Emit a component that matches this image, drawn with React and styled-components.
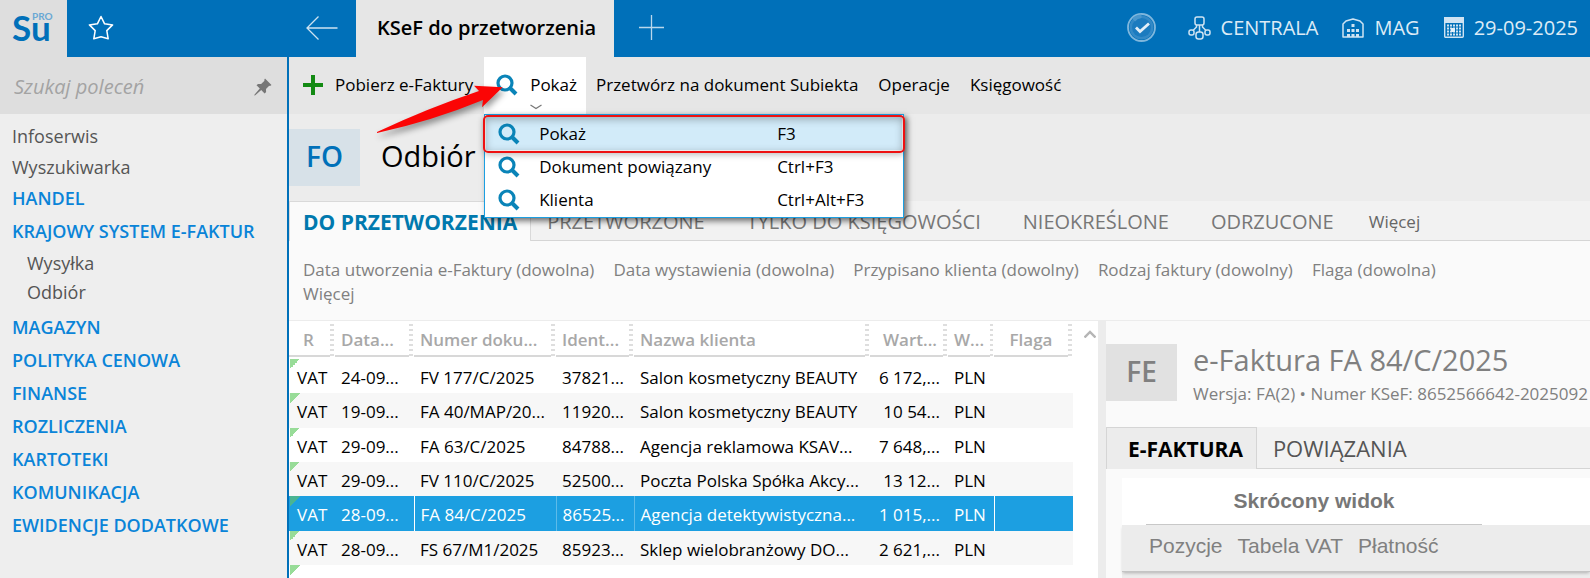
import React from "react";
import styled, { createGlobalStyle } from "styled-components";

const BLUE = "#0070b9";
const SANS = '"Open Sans", "Noto Sans", sans-serif';

const GlobalStyle = createGlobalStyle`
  * {
    box-sizing: border-box;
  }
  body {
    margin: 0;
    font: 17px/24px ${SANS};
    color: #000;
    overflow: hidden;
  }
  button {
    border: 0;
    padding: 0;
    background: none;
    font: inherit;
    color: inherit;
    white-space: nowrap;
    cursor: pointer;
  }
  a {
    color: inherit;
    text-decoration: none;
  }
  svg {
    display: block;
    flex: none;
  }
`;

const Page = styled.div`
  display: flex;
  flex-direction: column;
  height: 100vh;
  overflow: hidden;
`;

/* top bar */

const TopBar = styled.header`
  display: flex;
  flex: none;
  height: 57px;
  background: ${BLUE};
  color: #dcebf6;
  font-size: 20px;
`;

const LogoBox = styled.div`
  width: 67px;
  background: #dedede;
`;

const NavButtons = styled.div`
  display: flex;
  align-items: center;
  justify-content: space-between;
  width: 289px;
  padding: 0 18px 2px 21px;
`;

const ActiveTab = styled.div`
  display: flex;
  align-items: center;
  padding: 0 18px 2px 21px;
  background: #e6e6e6;
  color: #000;
  font-weight: 600;
  white-space: nowrap;
`;

const NewTab = styled.button`
  display: flex;
  align-items: center;
  padding: 0 25px 2px;
`;

const StatusBar = styled.div`
  display: flex;
  align-items: center;
  gap: 24px;
  margin-left: auto;
  padding: 0 12px 2px 0;
`;

const StatusItem = styled.button`
  display: flex;
  align-items: center;
  gap: 10px;
`;

const SyncState = styled(StatusItem)`
  margin-right: 8px;
`;

/* sidebar */

const Body = styled.div`
  display: flex;
  flex: 1;
  min-height: 0;
`;

const Sidebar = styled.aside`
  flex: none;
  width: 289px;
  border-right: 2px solid ${BLUE};
  background: #eee;
`;

const SearchRow = styled.div`
  display: flex;
  align-items: center;
  height: 57px;
  padding: 2px 15px 0 14px;
  background: #dedede;
`;

const SearchInput = styled.input`
  flex: 1;
  min-width: 0;
  padding: 0;
  border: 0;
  outline: 0;
  background: none;
  font: italic 20px/28px ${SANS};
  color: #555;
  &::placeholder {
    color: #a3a3a3;
    opacity: 1;
  }
`;

const Menu = styled.nav`
  display: flex;
  flex-direction: column;
  padding: 7px 12px;
  font-size: 18px;
  line-height: 31px;
  color: #555;
`;

const Category = styled.a`
  margin-bottom: 2px;
  color: #0a84d8;
  font-weight: 600;
`;

const SubMenu = styled.div`
  display: flex;
  flex-direction: column;
  margin-bottom: 5px;
  padding-left: 15px;
  line-height: 29px;
`;

/* toolbar with the open menu */

const Main = styled.main`
  display: flex;
  flex: 1;
  flex-direction: column;
  min-width: 0;
  background: #fafafa;
`;

const Toolbar = styled.div`
  display: flex;
  flex: none;
  height: 57px;
  background: #e6e6e6;
`;

const ToolButton = styled.button`
  position: relative;
  display: flex;
  align-items: center;
  gap: 12px;
  height: 57px;
  padding: 0 10px 2px;
  background: ${props => (props.$open ? "#fff" : "none")};
`;

const IconButton = styled(ToolButton)`
  padding-left: ${props => (props.$open ? "12px" : "14px")};
  padding-right: ${props => (props.$open ? "9px" : "11px")};
`;

const OpenMark = styled.svg`
  position: absolute;
  left: 46px;
  bottom: 4px;
`;

const MenuAnchor = styled.div`
  position: relative;
  z-index: 2;
`;

const Dropdown = styled.div`
  position: absolute;
  top: 57px;
  left: 0;
  width: 420px;
  padding: 2px 1px 1px;
  border: 1px solid #1c9fe1;
  background: #fff;
  box-shadow: 3px 3px 6px rgba(0, 0, 0, 0.55);
`;

const DropdownItem = styled.button`
  display: grid;
  grid-template-columns: 41px 238px 1fr;
  align-items: center;
  width: 100%;
  height: 33px;
  padding-left: 12px;
  text-align: left;
  background: ${props => (props.$active ? "#d2ebf9" : "none")};
`;

const Highlight = styled.div`
  position: absolute;
  top: 0;
  left: -2px;
  right: -2px;
  height: 38px;
  border: 2px solid #ee1111;
  border-radius: 5px;
  box-shadow: inset 0 2px 8px rgba(0, 0, 0, 0.3), 0 2px 6px rgba(0, 0, 0, 0.25);
  pointer-events: none;
`;

const Pointer = styled.svg`
  position: absolute;
  top: 23px;
  left: -114px;
  filter: drop-shadow(2px 4px 3px rgba(0, 0, 0, 0.4));
  pointer-events: none;
`;

/* page heading and tabs */

const Heading = styled.div`
  display: flex;
  flex: none;
  align-items: center;
  gap: 21px;
  height: 87px;
  background: #ececec;
`;

const Badge = styled.div`
  display: flex;
  flex: none;
  align-items: center;
  justify-content: center;
  width: 71px;
  height: 57px;
  padding-bottom: 3px;
  background: ${props => (props.$muted ? "#e1e1e1" : "#d7e1e8")};
  color: ${props => (props.$muted ? "#808080" : BLUE)};
  font-size: 28px;
  font-weight: 600;
`;

const Title = styled.h1`
  margin: 0;
  padding-bottom: 4px;
  font-size: 29px;
  line-height: 34px;
  font-weight: 400;
`;

const TabBar = styled.div`
  display: flex;
  flex: none;
  height: ${props => (props.$tall ? "42px" : "40px")};
  background: #f2f2f2;
`;

const Tab = styled.button`
  padding: 2px 26px 0 16px;
  border-bottom: 1px solid #d5d5d5;
  color: #777;
  font-size: 20px;
`;

const CurrentTab = styled(Tab)`
  padding: 1px 13px 0 13px;
  border: 1px solid #d9d9d9;
  border-bottom: 0;
  background: #fafafa;
  color: #0079ae;
  font-size: 21px;
  font-weight: 700;
`;

const MoreTab = styled(Tab)`
  flex: 1;
  padding: 2px 9px 0;
  color: #666;
  font-size: 17px;
  text-align: left;
`;

const Filters = styled.div`
  flex: none;
  padding: 17px 14px 14px;
  border-bottom: 1px solid #ececec;
  color: #808080;
`;

const FilterRow = styled.div`
  display: flex;
  gap: 19px;
`;

/* documents grid */

const Split = styled.div`
  display: grid;
  flex: 1;
  grid-template-columns: minmax(0, 809fr) 8px minmax(0, 484fr);
  min-height: 0;
`;

const GridPane = styled.section`
  display: flex;
  background: #fff;
  overflow: hidden;
`;

const ScrollColumn = styled.div`
  flex: none;
  width: 25px;
  padding: 9px 0 0 11px;
`;

const Splitter = styled.div`
  background: #ececec;
`;

const Table = styled.table`
  flex: 1;
  align-self: flex-start;
  min-width: 0;
  width: 100%;
  table-layout: fixed;
  border-collapse: collapse;
`;

const Th = styled.th`
  height: 38px;
  padding: 0;
  vertical-align: top;
  color: #a8a8a8;
  font-weight: 600;
  text-align: ${props => props.$align || "left"};
`;

const HeadCell = styled.div`
  display: flex;
  height: 36px;
`;

const HeadLabel = styled.div`
  flex: 1;
  padding: 7px 6px 0 ${props => (props.$first ? "14px" : "6px")};
  border-bottom: 2px solid #d8d8d8;
  white-space: nowrap;
`;

const Grip = styled.div`
  width: 5px;
  margin-top: 3px;
  border-right: 1px solid #fff;
  background: repeating-linear-gradient(#dedede 0 2px, #fff 2px 5px);
`;

const Row = styled.tr`
  height: 34px;
  background: ${props => (props.$selected ? "#1c9fe1" : "#fff")};
  color: ${props => (props.$selected ? "#fff" : "#000")};
  &:nth-child(even) {
    background: #f7f7f7;
  }
  &:nth-child(3n + 2) {
    height: 35px;
  }
`;

const Td = styled.td`
  padding: 3px 8px 0 6px;
  border-right: ${props => (props.$edge ? `1px solid ${props.$edge}` : "0")};
  text-align: ${props => props.$align || "left"};
  white-space: nowrap;
`;

const TypeTd = styled(Td)`
  padding-left: 8px;
  padding-right: 0;
  background: linear-gradient(135deg, ${props => (props.$selected ? "#4ab493" : "#98dc98")} 50%, transparent 50%) 1px 0 / 10px 10px no-repeat;
`;

/* invoice preview */

const Preview = styled.section`
  display: flex;
  flex-direction: column;
  overflow: hidden;
`;

const PreviewHead = styled.div`
  display: flex;
  flex: none;
  gap: 16px;
  height: 106px;
  padding-top: 23px;
  color: #808080;
`;

const PreviewTitle = styled.h2`
  margin: 0 0 6px;
  font-size: 29px;
  line-height: 32px;
  font-weight: 400;
`;

const PreviewText = styled.div`
  min-width: 0;
  white-space: nowrap;
`;

const PreviewCurrent = styled(Tab)`
  padding: 0 13px 0 21px;
  border: 1px solid #d5d5d5;
  border-bottom: 0;
  background: #ececec;
  color: #000;
  font-size: 21px;
  font-weight: 700;
`;

const PreviewTab = styled(Tab)`
  flex: 1;
  padding: 1px 16px 0;
  color: #555;
  font-size: 22px;
  text-align: left;
`;

const Sheet = styled.div`
  flex: 1;
  margin: 9px 0 0 16px;
  background: #ececec;
  color: #777;
  font: 21px/24px "Liberation Sans", Arial, sans-serif;
`;

const SheetTop = styled.div`
  height: 47px;
  padding-left: 24px;
  background: #fff;
`;

const SheetTitle = styled.h3`
  width: 336px;
  height: 47px;
  margin: 0;
  padding-top: 11px;
  border-bottom: 1px solid #c8c8c8;
  font-size: 21px;
  text-align: center;
`;

const SheetNav = styled.nav`
  display: flex;
  align-items: center;
  gap: 15px;
  height: 47px;
  padding: 0 27px 4px;
  border-bottom: 1px solid #c4c4c4;
  box-shadow: 0 2px 3px -1px rgba(0, 0, 0, 0.25);
  color: #808080;
`;

const Logo = () => (
  <svg width="67" height="57" viewBox="0 0 67 57" role="img" aria-label="Su PRO">
    <text x="12" y="41" fontFamily="Lato, sans-serif" fontSize="35" fontWeight="700" fill="#0070b9">Su</text>
    <text x="32" y="20" fontFamily="Lato, sans-serif" fontSize="10" fontWeight="700" fill="#6aa8d4">PRO</text>
  </svg>
);

const Magnifier = () => (
  <svg width="22" height="22" viewBox="0 0 22 22" fill="none" stroke="#0a84b8">
    <circle cx="9" cy="9" r="7" strokeWidth="3.200" />
    <path d="M14 14l6 6" strokeWidth="4" />
  </svg>
);

const PlusIcon = () => (
  <svg width="20" height="20" viewBox="0 0 20 20" fill="#138a13">
    <path d="M8 0h4v8h8v4h-8v8H8v-8H0V8h8z" />
  </svg>
);

const Star = () => (
  <svg width="26" height="26" viewBox="0 0 26 26" fill="none" stroke="#fff" strokeWidth="1.5" strokeLinejoin="round">
    <path d="M13 1.500l3.600 7.300 8 1.100-5.800 5.700 1.400 8.200-7.200-2-7.200 2 1.400-8.200L1.400 9.900l8-1.100z" />
  </svg>
);

const BackArrow = () => (
  <svg width="32" height="24" viewBox="0 0 32 24" fill="none" stroke="#cde2f1" strokeWidth="1.3">
    <path d="M12.500.500L1 12l11.500 11.500M1 12h30.500" />
  </svg>
);

const ThinPlus = () => (
  <svg width="25" height="25" viewBox="0 0 25 25" fill="none" stroke="#b9d7ec" strokeWidth="1.300">
    <path d="M12.500 0v25M0 12.500h25" />
  </svg>
);

const Pin = () => (
  <svg width="18" height="18" viewBox="0 0 18 18" fill="#777">
    <path d="M11 .5l6.500 6.500-1.500 1-.8-.3-3.200 3.400.1 3-1.500 1.400-3.400-3.400L1 17.500H.4v-.8l5.400-6.100L2.500 7.300 4 6l3.100.100 3.400-3.300L10.200 2z" />
  </svg>
);

const CheckCircle = () => (
  <svg width="29" height="29" viewBox="0 0 29 29" fill="none">
    <circle cx="14.500" cy="14.500" r="12" fill="#3389c6" />
    <circle cx="14.500" cy="14.500" r="13.500" stroke="#7fb7dd" strokeWidth="1.800" />
    <circle cx="14.500" cy="14.500" r="9.500" fill="#1b7bbf" />
    <path d="M14.500 1.500A13 13 0 0 0 5 5.500l3 3a9.500 9.500 0 0 1 6.500-3.500z" fill="#4a97cd" />
    <path d="M9 14.500l4 4 9-8" stroke="#e3eff8" strokeWidth="2.800" />
  </svg>
);

const Network = () => (
  <svg width="23" height="24" viewBox="0 0 23 24" fill="none" stroke="#cfe3f2" strokeWidth="1.500">
    <rect x="7" y="1" width="9" height="8" rx="2" />
    <rect x="8" y="16" width="7" height="7" rx="2.500" />
    <rect x="1" y="14" width="5" height="5" rx="2" />
    <rect x="17" y="14" width="5" height="5" rx="2" />
    <path d="M11.500 9v7M8.500 9v2L5 14.500M14.500 9v2l3.500 3.500" />
  </svg>
);

const Warehouse = () => (
  <svg width="22" height="20" viewBox="0 0 22 20" fill="none" stroke="#cfe3f2" strokeWidth="1.500">
    <path d="M1 19V6l3-3 7-2 7 2 3 3v13z" strokeLinejoin="round" />
    <g fill="#cfe3f2" stroke="none">
      <path d="M9.500 6h3v3h-3zM5 11h3v3H5zM9.500 11h3v3h-3zM14 11h3v3h-3zM5 16h3v3H5zM9.500 16h3v3h-3zM14 16h3v3h-3z" />
    </g>
  </svg>
);

const Calendar = () => (
  <svg width="20" height="21" viewBox="0 0 20 21" fill="none">
    <rect x=".7" y=".7" width="18.600" height="19.600" rx="1" stroke="#cfe3f2" strokeWidth="1.400" />
    <path d="M0 0h20v6H0z" fill="#cfe3f2" />
    <path d="M3 8.500h14M3 11.500h14M3 14.500h14M3 17.500h14" stroke="#cfe3f2" strokeWidth="2" strokeDasharray="2 1" />
    <path d="M7 11h4v4H7z" fill="#e3eff8" />
  </svg>
);

const RedArrow = () => (
  <Pointer width="136" height="62" viewBox="0 0 136 62" fill="#fb0505">
    <path d="M7 52Q58 28 109 11l-5-5.300 28.700 1.600L112 27.300l1-7.300Q62 41 7 53z" />
  </Pointer>
);

const CATEGORIES = ["MAGAZYN", "POLITYKA CENOWA", "FINANSE", "ROZLICZENIA", "KARTOTEKI", "KOMUNIKACJA", "EWIDENCJE DODATKOWE"];

const MENU_ITEMS = [
  ["Pokaż", "F3"],
  ["Dokument powiązany", "Ctrl+F3"],
  ["Klienta", "Ctrl+Alt+F3"]
];

const FILTERS = [
  "Data utworzenia e-Faktury (dowolna)",
  "Data wystawienia (dowolna)",
  "Przypisano klienta (dowolny)",
  "Rodzaj faktury (dowolny)",
  "Flaga (dowolna)"
];

const COLUMNS = [
  { label: "R", width: 46 },
  { label: "Data...", width: 79 },
  { label: "Numer doku...", width: 142 },
  { label: "Ident...", width: 78 },
  { label: "Nazwa klienta" },
  { label: "Wart...", width: 78, align: "right" },
  { label: "W...", width: 46 },
  { label: "Flaga", width: 79, align: "center" }
];

const ROWS = [
  ["VAT", "24-09...", "FV 177/C/2025", "37821...", "Salon kosmetyczny BEAUTY", "6 172,...", "PLN"],
  ["VAT", "19-09...", "FA 40/MAP/20...", "11920...", "Salon kosmetyczny BEAUTY", "10 54...", "PLN"],
  ["VAT", "29-09...", "FA 63/C/2025", "84788...", "Agencja reklamowa KSAV...", "7 648,...", "PLN"],
  ["VAT", "29-09...", "FV 110/C/2025", "52500...", "Poczta Polska Spółka Akcy...", "13 12...", "PLN"],
  ["VAT", "28-09...", "FA 84/C/2025", "86525...", "Agencja detektywistyczna...", "1 015,...", "PLN"],
  ["VAT", "28-09...", "FS 67/M1/2025", "85923...", "Sklep wielobranżowy DO...", "2 621,...", "PLN"],
  ["", "", "", "", "", "", ""]
];

const SELECTED = 4;

const DocumentRow = ({ cells, selected }) => {
  const [type, date, number, ident, client, value, currency] = cells;
  const strong = selected && "#fff";
  const faint = selected && "#5dbbe9";
  return (
    <Row $selected={selected}>
      <TypeTd $selected={selected}>{type}</TypeTd>
      <Td $edge={strong}>{date}</Td>
      <Td $edge={faint}>{number}</Td>
      <Td $edge={faint}>{ident}</Td>
      <Td>{client}</Td>
      <Td $align="right">{value}</Td>
      <Td $edge={strong}>{currency}</Td>
      <Td />
    </Row>
  );
};

const App = () => (
  <Page>
    <GlobalStyle />
    <TopBar>
      <LogoBox><Logo /></LogoBox>
      <NavButtons>
        <button aria-label="Ulubione"><Star /></button>
        <button aria-label="Wstecz"><BackArrow /></button>
      </NavButtons>
      <ActiveTab>KSeF do przetworzenia</ActiveTab>
      <NewTab aria-label="Nowa karta"><ThinPlus /></NewTab>
      <StatusBar>
        <SyncState aria-label="Status"><CheckCircle /></SyncState>
        <StatusItem><Network />CENTRALA</StatusItem>
        <StatusItem><Warehouse />MAG</StatusItem>
        <StatusItem><Calendar />29-09-2025</StatusItem>
      </StatusBar>
    </TopBar>

    <Body>
      <Sidebar>
        <SearchRow>
          <SearchInput type="text" placeholder="Szukaj poleceń" aria-label="Szukaj poleceń" />
          <button aria-label="Przypnij"><Pin /></button>
        </SearchRow>
        <Menu>
          <a href="#infoserwis">Infoserwis</a>
          <a href="#wyszukiwarka">Wyszukiwarka</a>
          <Category href="#handel">HANDEL</Category>
          <Category href="#ksef">KRAJOWY SYSTEM E-FAKTUR</Category>
          <SubMenu>
            <a href="#wysylka">Wysyłka</a>
            <a href="#odbior">Odbiór</a>
          </SubMenu>
          {CATEGORIES.map(name => (
            <Category key={name} href="#kategoria">{name}</Category>
          ))}
        </Menu>
      </Sidebar>

      <Main>
        <Toolbar>
          <IconButton><PlusIcon />Pobierz e-Faktury</IconButton>
          <MenuAnchor>
            <IconButton $open aria-expanded="true">
              <Magnifier />
              Pokaż
              <OpenMark width="12" height="6" viewBox="0 0 12 6" fill="none" stroke="#777" strokeWidth="1.200">
                <path d="M.5 1L6 4.500 11.500 1" />
              </OpenMark>
            </IconButton>
            <Dropdown>
              {MENU_ITEMS.map(([label, keys], i) => (
                <DropdownItem key={label} $active={i === 0}>
                  <Magnifier />
                  <span>{label}</span>
                  <span>{keys}</span>
                </DropdownItem>
              ))}
              <Highlight />
            </Dropdown>
            <RedArrow />
          </MenuAnchor>
          <ToolButton>Przetwórz na dokument Subiekta</ToolButton>
          <ToolButton>Operacje</ToolButton>
          <ToolButton>Księgowość</ToolButton>
        </Toolbar>

        <Heading>
          <Badge>FO</Badge>
          <Title>Odbiór</Title>
        </Heading>

        <TabBar>
          <CurrentTab>DO PRZETWORZENIA</CurrentTab>
          <Tab>PRZETWORZONE</Tab>
          <Tab>TYLKO DO KSIĘGOWOŚCI</Tab>
          <Tab>NIEOKREŚLONE</Tab>
          <Tab>ODRZUCONE</Tab>
          <MoreTab>Więcej</MoreTab>
        </TabBar>

        <Filters>
          <FilterRow>
            {FILTERS.map(name => (
              <button key={name}>{name}</button>
            ))}
          </FilterRow>
          <FilterRow>
            <button>Więcej</button>
          </FilterRow>
        </Filters>

        <Split>
          <GridPane>
            <Table>
              <colgroup>
                {COLUMNS.map(c => (
                  <col key={c.label} width={c.width} />
                ))}
              </colgroup>
              <thead>
                <tr>
                  {COLUMNS.map((c, i) => (
                    <Th key={c.label} $align={c.align}>
                      <HeadCell>
                        <HeadLabel $first={i === 0}>{c.label}</HeadLabel>
                        <Grip />
                      </HeadCell>
                    </Th>
                  ))}
                </tr>
              </thead>
              <tbody>
                {ROWS.map((cells, i) => (
                  <DocumentRow key={i} cells={cells} selected={i === SELECTED} />
                ))}
              </tbody>
            </Table>
            <ScrollColumn>
              <svg width="12" height="8" viewBox="0 0 12 8" fill="none" stroke="#b5b5b5" strokeWidth="2.400">
                <path d="M.5 7.500L6 2l5.500 5.500" />
              </svg>
            </ScrollColumn>
          </GridPane>
          <Splitter />
          <Preview>
            <PreviewHead>
              <Badge $muted>FE</Badge>
              <PreviewText>
                <PreviewTitle>e-Faktura FA 84/C/2025</PreviewTitle>
                <div>Wersja: FA(2) • Numer KSeF: 8652566642-2025092</div>
              </PreviewText>
            </PreviewHead>
            <TabBar $tall>
              <PreviewCurrent>E-FAKTURA</PreviewCurrent>
              <PreviewTab>POWIĄZANIA</PreviewTab>
            </TabBar>
            <Sheet>
              <SheetTop>
                <SheetTitle>Skrócony widok</SheetTitle>
              </SheetTop>
              <SheetNav>
                <a href="#pozycje">Pozycje</a>
                <a href="#tabela-vat">Tabela VAT</a>
                <a href="#platnosc">Płatność</a>
              </SheetNav>
            </Sheet>
          </Preview>
        </Split>
      </Main>
    </Body>
  </Page>
);

export default App;
